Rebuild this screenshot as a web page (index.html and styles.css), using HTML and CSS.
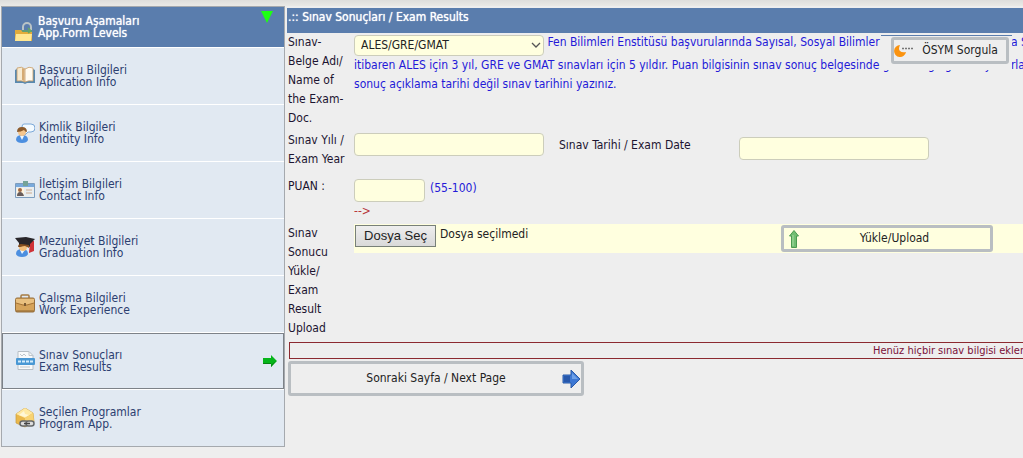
FILE: index.html
```html
<!DOCTYPE html>
<html lang="tr">
<head>
<meta charset="utf-8">
<title>Sınav Sonuçları / Exam Results</title>
<link rel="stylesheet" href="styles.css">
</head>
<body>
<div class="topbar"></div>
<div class="layout">
  <nav class="sidebar">
    <div class="side-head">
      <svg class="icon" viewBox="0 0 20 20"><path d="M9 8V5a4 4 0 0 1 8 0v3" fill="none" stroke="#b9c3c6" stroke-width="2"/><path d="M1 8h6l2 2h9v9H1z" fill="#e2ac3b"/><path d="M2 12h16l-1 7H1z" fill="#ffe792"/><path d="M8 9h9l-3-3M17 9l-3 2" fill="none" stroke="#63a865" stroke-width="1.5"/></svg>
      <span>Başvuru Aşamaları<br>App.Form Levels</span>
      <svg class="collapse" viewBox="0 0 12 12"><path d="M0 0h12L6 12z" fill="#1eff12"/></svg>
    </div>
    <a class="item" href="#">
      <svg class="icon" viewBox="0 0 20 20"><path d="M0 4l2-1v12h16V3l2 1v13h-8l-2 1-2-1H0z" fill="#5889b0"/><path d="M2 2q5-2 8 1v13q-4-2-8-1z" fill="#f7ead0" stroke="#c69c67" stroke-width=".8"/><path d="M10 3q4-3 8-1v13q-4-1-8 1z" fill="#fffaf0" stroke="#c69c67" stroke-width=".8"/><path d="M7 2l2 1v12l-2-1z" fill="#d5aa72"/></svg>
      <span>Başvuru Bilgileri<br>Aplication Info</span>
    </a>
    <a class="item" href="#">
      <svg class="icon" viewBox="0 0 20 20"><path d="M9 1h7q4 0 4 4t-4 4h-3l-3 3V8Q7 8 7 4q0-3 2-3z" fill="#f3faff" stroke="#7da9d8"/><path d="M1 17q0-5 6-5t6 5q-1 3-6 3t-6-3z" fill="#4c8fe0"/><path d="M5 13h4l-2 4z" fill="#eef7ff"/><circle cx="7" cy="9" r="4" fill="#f5c68e"/><path d="M2 9q0-5 5-5t5 5q-2 0-3-2-3 2-7 2z" fill="#8c5b2c"/></svg>
      <span>Kimlik Bilgileri<br>Identity Info</span>
    </a>
    <a class="item" href="#">
      <svg class="icon" viewBox="0 0 20 20"><path d="M.5 3.500h19v14H.5z" fill="#e8edf0" stroke="#7d9dbe"/><path d="M1 4h18v3H1z" fill="#78a9dc"/><path d="M8 1h5v5H8z" fill="#75a398"/><path d="M2 8h7v8H2z" fill="#fff5df"/><circle cx="5" cy="10" r="2" fill="#a16946"/><path d="M2 16q0-4 3-4t4 4z" fill="#675c5b"/><path d="M11 10h6M11 13h6" stroke="#ccab90"/></svg>
      <span>İletişim Bilgileri<br>Contact Info</span>
    </a>
    <a class="item" href="#">
      <svg class="icon" viewBox="0 0 20 20"><path d="M15 4h4v10l-5 2z" fill="#cf3338"/><path d="M1 17q0-5 6-5t6 5q-1 3-6 3t-6-3z" fill="#4c8fe0"/><path d="M5 13h5l-3 4z" fill="#eef7ff"/><circle cx="8" cy="10" r="4" fill="#f3bf7b"/><path d="M0 1l11-1 9 2-5 5v3l-4-2-7 2V6z" fill="#28262a"/><path d="M3 10q0-3 3-3l8 1v3l-4-2z" fill="#865020"/></svg>
      <span>Mezuniyet Bilgileri<br>Graduation Info</span>
    </a>
    <a class="item" href="#">
      <svg class="icon" viewBox="0 0 20 20"><path d="M6 5V2q0-1 1-1h6q1 0 1 1v3" fill="none" stroke="#a57b42" stroke-width="1.500"/><rect x=".5" y="4" width="19" height="14" rx="1.500" fill="#d6a45b" stroke="#96703f"/><path d="M1 5h18v4l-7 2H8L1 9z" fill="#e9c07f"/><path d="M1 9l7 2h4l7-2" fill="none" stroke="#a57335"/><path d="M9 9h2v3H9z" fill="#7b5b34"/><path d="M1 17h18" stroke="#8b6433"/></svg>
      <span>Çalışma Bilgileri<br>Work Experience</span>
    </a>
    <a class="item active" href="#">
      <svg class="icon" viewBox="0 0 20 20"><path d="M3 .5h11l4 4v14H3z" fill="#f8fafb" stroke="#b6bec5"/><path d="M14 .5v4h4M5 3l2 2 2-2 2 2M5 16h10" fill="none" stroke="#c0c7cd"/><rect x="1" y="7" width="19" height="7" rx="1" fill="#4998d4"/><path d="M3 10.500h15" stroke="#d3ecfb" stroke-width="2" stroke-dasharray="3 1"/></svg>
      <span>Sınav Sonuçları<br>Exam Results</span>
      <svg class="go" viewBox="0 0 14 12"><path d="M0 3h8V0l6 6-6 6V9H0z" fill="#06b51b"/><path d="M0 8h8v1H0zM8 10l5-4-5 6z" fill="#078210"/></svg>
    </a>
    <a class="item" href="#">
      <svg class="icon" viewBox="0 0 20 20"><path d="M1 6l9-6 8 5 1 9-9 5-9-4z" fill="#eab84b" stroke="#c99b3c" stroke-width=".7"/><path d="M1 6l9-6 8 5-8 5z" fill="#ffe9a2"/><path d="M10 10l8-5 1 9-9 5z" fill="#f8d372"/><path d="M4 7l5-4 1 3 4 1-4 2z" fill="#fff7d6"/><rect x="5" y="13" width="8" height="5" rx="2.500" fill="#ddd" stroke="#65686a" stroke-width="1.500"/><rect x="11" y="13" width="8" height="5" rx="2.500" fill="#ddd" stroke="#65686a" stroke-width="1.500"/><path d="M9 15.500h6" stroke="#444" stroke-width="1.500"/></svg>
      <span>Seçilen Programlar<br>Program App.</span>
    </a>
  </nav>

  <main class="main">
    <h1 class="title">.:: Sınav Sonuçları / Exam Results</h1>
    <form class="form">
      <label class="name" for="exam">Sınav-<br>Belge Adı/<br>Name of<br>the Exam-<br>Doc.</label>
      <div class="note">
        <span class="select-wrap">
          <select class="field exam" id="exam"><option>ALES/GRE/GMAT</option></select>
          <svg class="chevron" viewBox="0 0 10 6"><path d="M1 1l4 4 4-4" fill="none" stroke="#555" stroke-width="1.300"/></svg>
        </span>
        Fen Bilimleri Enstitüsü başvurularında Sayısal, Sosyal Bilimler Enstitüsü başvurularında Sözel<br>itibaren ALES için 3 yıl, GRE ve GMAT sınavları için 5 yıldır. Puan bilgisinin sınav sonuç belgesinde göründüğü gibi ve yuvarlanmadan<br>sonuç açıklama tarihi değil sınav tarihini yazınız.
      </div>

      <label class="name" for="year">Sınav Yılı /<br>Exam Year</label>
      <div class="dates">
        <input class="field" id="year" type="text">
        <label class="date-name" for="date">Sınav Tarihi / Exam Date</label>
        <input class="field date" id="date" type="text">
      </div>

      <label class="name" for="score">PUAN :</label>
      <div class="score-cell">
        <div class="score-line"><input class="field score" id="score" type="text"><span class="range">(55-100)</span></div>
        <div class="arrow">--&gt;</div>
      </div>

      <div class="name">Sınav<br>Sonucu<br>Yükle/<br>Exam<br>Result<br>Upload</div>
      <div class="upload">
        <div class="picker">
          <input class="file" id="file" type="file">
          <label class="file-button" for="file">Dosya Seç</label>
          <span>Dosya seçilmedi</span>
        </div>
        <button class="btn upload-btn" type="button">
          <svg class="up" viewBox="0 0 10 18"><path d="M5 .5L9.500 6H7.500v11.500h-5V6H.5z" fill="#71bd72" stroke="#4a9a50"/><path d="M4 5v11" stroke="#a7dda2"/></svg>
          <span>Yükle/Upload</span>
        </button>
      </div>
    </form>
    <div class="empty">Henüz hiçbir sınav bilgisi eklenmedi</div>
    <button class="btn next" type="button">
      <span>Sonraki Sayfa / Next Page</span>
      <svg class="next-icon" viewBox="0 0 19 20"><path d="M1 6h8V1l9 9-9 9v-5H1z" fill="#3d78d4" stroke="#2b5aa8"/><path d="M2 7h6v6H2z" fill="#2858ab"/><path d="M10 4l6 6H10z" fill="#6da0e8"/></svg>
    </button>
    <div class="query">
      <button class="btn query-btn" type="button">
        <svg class="osym" viewBox="0 0 20 14"><path d="M6 1a6 6 0 1 0 6 7q-4 1-6-1t0-6z" fill="#fb930f"/><path d="M8 4.500h11" stroke="#777" stroke-width="1.500" stroke-dasharray="2 1"/></svg>
        <span>ÖSYM Sorgula</span>
      </button>
    </div>
  </main>
</div>
</body>
</html>
```
FILE: styles.css
```css
* { box-sizing: border-box; }

body {
  margin: 0;
  overflow-x: hidden;
  background: #eee;
  color: #1c1430;
  font: 12px/19px "DejaVu Sans Condensed", Tahoma, sans-serif;
}

button, input, select { font: inherit; color: #222; }

.topbar {
  height: 6px;
  background: linear-gradient(#dededc, #eae9e6);
}

.layout {
  display: flex;
  align-items: flex-start;
  gap: 2px;
  padding-left: 1px;
}

/* Steps menu */
.sidebar {
  flex: 0 0 284px;
  border: 1px solid #a5a9ae;
  background: #fff;
  line-height: 12px;
}

.side-head, .item {
  position: relative;
  display: flex;
  align-items: center;
  gap: 4px;
  padding-left: 12px;
}

.side-head {
  height: 40px;
  background: #5a7dad;
  color: #fff;
  text-shadow: 0 0 1px #fff;
}

.side-head .icon { margin-top: 10px; }

.item {
  height: 56px;
  margin-top: 1px;
  border: 1px solid #e1e9f2;
  background: #e1e9f2;
  color: #2c4070;
  text-decoration: none;
}

.item.active { border-color: #7d8288; }

.icon { width: 20px; height: 20px; flex: none; }

.collapse {
  position: absolute;
  top: 4px;
  right: 11px;
  width: 12px;
  height: 12px;
}

.go {
  width: 14px;
  height: 12px;
  margin-left: auto;
  margin-right: 6px;
}

/* Exam form */
.main {
  position: relative;
  flex: 1;
  min-width: 0;
  overflow: hidden;
  padding-top: 2px;
}

.title {
  height: 25px;
  margin: 0;
  padding-left: 1px;
  background: #5a7dad;
  color: #fff;
  font-size: 12px;
  line-height: 18px;
  font-weight: 400;
  text-shadow: 0 0 1px #fff;
}

.form {
  display: grid;
  grid-template-columns: 66px minmax(0, 1fr);
  row-gap: 3px;
  padding-left: 1px;
}

.name { white-space: nowrap; }

.note {
  color: #2419d8;
  white-space: nowrap;
}

.field {
  width: 190px;
  height: 23px;
  border: 1px solid #cccdbb;
  border-radius: 4px;
  background: #ffffdf;
}

.select-wrap {
  position: relative;
  display: inline-block;
  height: 23px;
  vertical-align: top;
}

.exam {
  height: 21px;
  margin: 2px 0 0;
  padding: 0 0 0 6px;
  vertical-align: top;
  appearance: none;
}

.chevron {
  position: absolute;
  top: 9px;
  right: 3px;
  width: 10px;
  height: 6px;
  pointer-events: none;
}

.dates {
  display: flex;
  align-items: flex-start;
  padding-top: 2px;
  height: 43px;
}

.date-name { width: 180px; margin: 3px 0 0 15px; }
.date { margin-top: 4px; }

.score-cell { padding-top: 2px; }
.score-line { display: flex; gap: 5px; }
.score { width: 71px; }
.range { color: #2419d8; }
.arrow { color: #b8383c; }

.upload {
  display: flex;
  align-items: flex-start;
  height: 29px;
  padding-top: 1px;
  background: #ffffdf;
}

.picker {
  position: relative;
  display: flex;
  gap: 4px;
  flex: 0 0 427px;
  padding-left: 1px;
  color: #222;
}

.file {
  position: absolute;
  width: 81px;
  height: 22px;
  opacity: 0;
}

.file-button {
  width: 81px;
  height: 22px;
  border: 1px solid #788078;
  background: linear-gradient(#eee, #d9d9d9);
  font: 13px/20px "Liberation Sans", Arial, sans-serif;
  text-align: center;
}

.btn {
  position: relative;
  display: flex;
  align-items: center;
  border: 3px solid #b9bec2;
  border-radius: 3px;
  background: transparent;
  padding: 0;
}

.btn span { flex: 1; text-align: center; }

.upload-btn { width: 212px; height: 27px; padding-left: 5px; }
.up { width: 10px; height: 18px; }

.empty {
  height: 17px;
  margin: 4px 0 2px 2px;
  padding-left: 583px;
  border: 1px solid #8c2a30;
  border-right-width: 0;
  color: #7a1038;
  font-size: 11px;
  line-height: 15px;
  white-space: nowrap;
}

.next { width: 296px; height: 35px; margin-left: 1px; }

.next-icon {
  position: absolute;
  top: 5px;
  right: 0;
  width: 19px;
  height: 20px;
}

/* Lookup button floating over the note */
.query {
  position: absolute;
  top: 29px;
  right: 11px;
  width: 131px;
  height: 35px;
  padding: 1px 0 0 10px;
  border-top: 1px solid #5a7dad;
  background: #eee;
}

.query-btn { width: 118px; height: 27px; }
.osym { width: 20px; height: 14px; }
```
